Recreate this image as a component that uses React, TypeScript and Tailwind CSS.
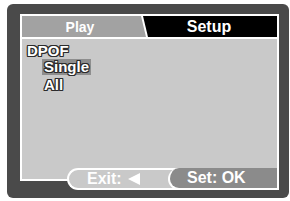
import React from 'react';

const OUTLINE =
  '[text-shadow:1px_0_#2b2b2b,-1px_0_#2b2b2b,0_1px_#2b2b2b,0_-1px_#2b2b2b,1px_1px_#2b2b2b,-1px_-1px_#2b2b2b,1px_-1px_#2b2b2b,-1px_1px_#2b2b2b]';

const App: React.FC = () => {
  return (
    <div className="w-[290px] h-[201px] bg-white pt-[4px] pl-[7px] font-['Liberation_Sans',Arial,sans-serif]">
      {/* Camera frame */}
      <div className="relative w-[282px] h-[194px] rounded-[6px] bg-[#4a4a4a] pt-[10px] pl-[13px]">
        <div className="w-[259px] h-[167px] border-2 border-white bg-[#c9c9c9] flex flex-col">
          {/* Tabs */}
          <div className="flex h-[23px] bg-white border-b-2 border-white">
            <div className="w-[126px] shrink-0 bg-[#a2a2a2] [clip-path:polygon(0_0,119px_0,124px_100%,0_100%)] flex items-center justify-center pr-[10px] pt-[2px] text-white font-bold text-[14px]">
              Play
            </div>
            <div className="flex-1 -ml-[7px] bg-black [clip-path:polygon(2px_0,100%_0,100%_100%,7px_100%)] flex items-center justify-center pt-[1px] text-white font-bold text-[16px]">
              Setup
            </div>
          </div>

          {/* Menu */}
          <div className="pl-[5px] pt-[4px] text-[15px] leading-4 font-bold text-white">
            <div className={OUTLINE}>DPOF</div>
            <div className="ml-[15px] w-fit bg-[#8e8e8e] px-[2px]">
              <span className={OUTLINE}>Single</span>
            </div>
            <div className={`ml-[17px] mt-[2px] ${OUTLINE}`}>All</div>
          </div>
        </div>

        {/* Bottom buttons */}
        <div className="absolute left-[60px] top-[164px] w-[212px] h-[22px] flex">
          <div className="w-[112px] shrink-0 h-full rounded-l-full border-2 border-r-0 border-white bg-[#c9c9c9] pl-[18px] flex items-center gap-[6px] text-white font-bold text-[16px]">
            <span>Exit:</span>
            <svg width="12" height="12" viewBox="0 0 12 12">
              <path d="M0 6L12 0L12 12Z" fill="white" />
            </svg>
          </div>
          <div className="-ml-[11px] flex-1 h-full rounded-l-full border-2 border-t-0 border-white bg-[#8b8b8b] pl-[17px] flex items-center text-white font-bold text-[16px]">
            Set: OK
          </div>
        </div>
      </div>
    </div>
  );
};

export default App;
